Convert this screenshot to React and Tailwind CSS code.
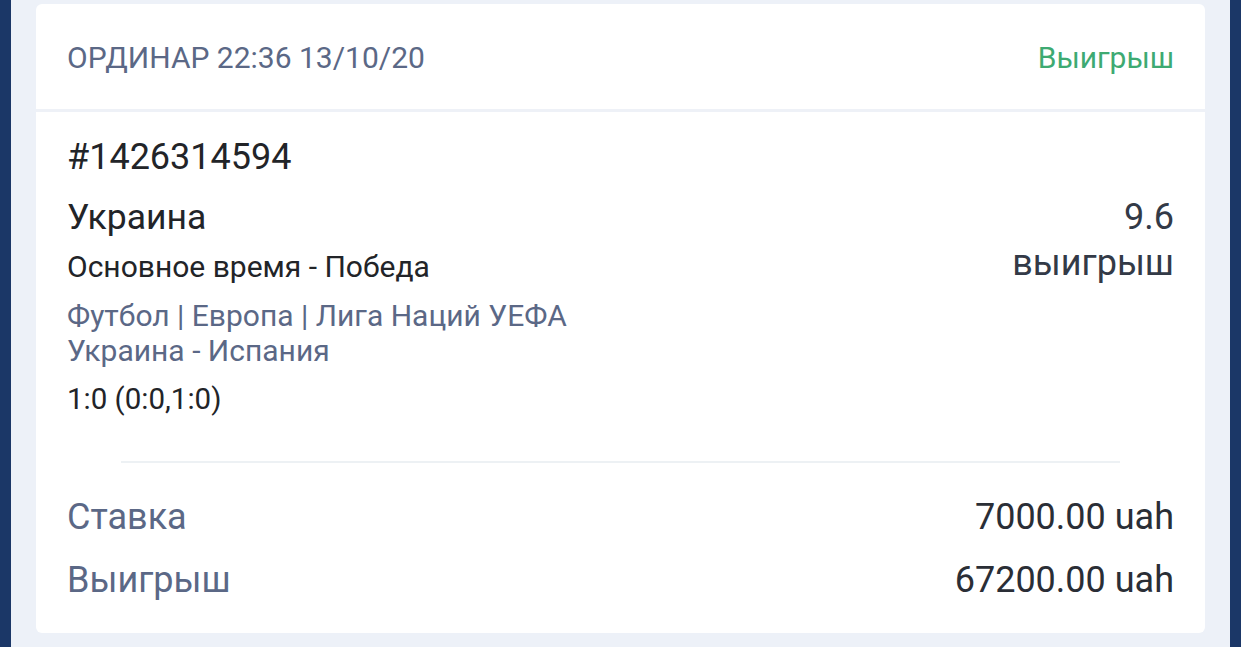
export default function App() {
  return (
    <div className="w-[1241px] h-[647px] bg-[#1b3767] flex overflow-hidden" style={{ fontFamily: 'Roboto, "Noto Sans", sans-serif' }}>
      <div className="ml-[11px] mr-[11px] flex-1 bg-[#edf1f8] pl-[25px] pr-[25px] pt-[4px]">
        <div className="bg-white rounded-[6px] h-[629px] flex flex-col">
          <div className="h-[105px] flex items-center justify-between px-[31px] pt-[2px]">
            <span className="text-[30px] text-[#5b6886]">ОРДИНАР 22:36 13/10/20</span>
            <span className="text-[30px] text-[#3eaa72]">Выигрыш</span>
          </div>
          <div className="h-[3px] bg-[#eef1f7]" />
          <div className="px-[31px] pt-[25px] text-[#222428]">
            <div className="text-[36px] leading-[40px]">#1426314594</div>
            <div className="flex justify-between mt-[18px]">
              <div className="flex flex-col">
                <div className="text-[35.5px] leading-[44px]">Украина</div>
                <div className="text-[30px] leading-[36px] mt-[10px]">Основное время - Победа</div>
                <div className="text-[30px] leading-[35px] mt-[13px] text-[#5b6886]">Футбол | Европа | Лига Наций УЕФА</div>
                <div className="text-[30px] leading-[35px] text-[#5b6886]">Украина - Испания</div>
                <div className="text-[29.5px] leading-[36px] mt-[13px]">1:0 (0:0,1:0)</div>
              </div>
              <div className="flex flex-col items-end text-[#333a47]">
                <div className="text-[36px] leading-[44px]">9.6</div>
                <div className="text-[36px] leading-[44px] mt-[2px]">выигрыш</div>
              </div>
            </div>
          </div>
          <div className="mx-[85px] mt-[44px] h-[2px] bg-[#edf1f4]" />
          <div className="px-[31px] pt-[32px] flex flex-col gap-[19px]">
            <div className="flex justify-between items-center h-[44px]">
              <span className="text-[36px] text-[#5b6886]">Ставка</span>
              <span className="text-[36px] text-[#2a2e36]">7000.00 uah</span>
            </div>
            <div className="flex justify-between items-center h-[44px]">
              <span className="text-[36px] text-[#5b6886]">Выигрыш</span>
              <span className="text-[36px] text-[#2a2e36]">67200.00 uah</span>
            </div>
          </div>
        </div>
      </div>
    </div>
  );
}
